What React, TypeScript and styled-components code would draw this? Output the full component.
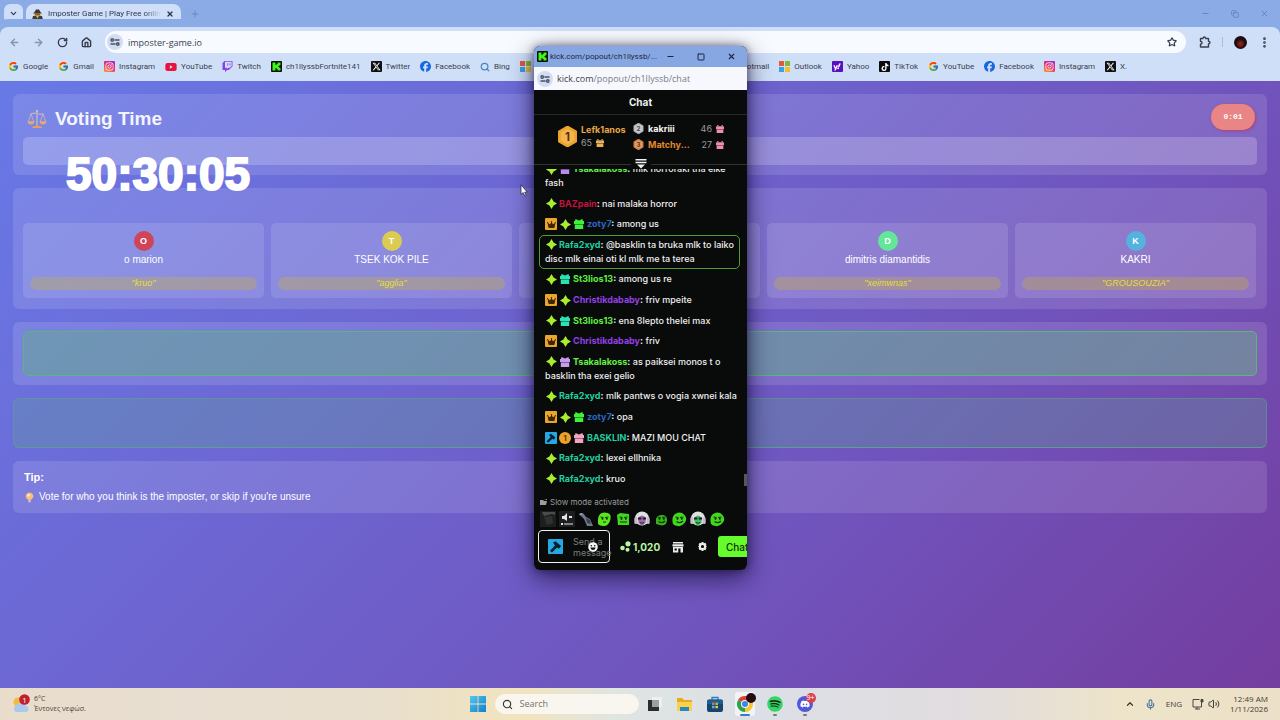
import React from "react";
import styled, { createGlobalStyle, css } from "styled-components";
import {
  ArrowLeft, ArrowRight, ChevronDown, ChevronUp, EllipsisVertical, House, Mic, Minus,
  Plus, RotateCw, Search, Square, Star, Volume2, X, Copy,
} from "lucide-react";
import {
  FaCrown, FaDiscord, FaFacebook, FaInstagram, FaSpotify, FaTiktok,
  FaTwitch, FaXTwitter, FaYahoo, FaYoutube,
} from "react-icons/fa6";
import { FcGoogle } from "react-icons/fc";

const GlobalStyle = createGlobalStyle`
  * { box-sizing: border-box; }
  body { margin: 0; font-family: "Liberation Sans", Arial, sans-serif; }
  button, input, textarea { font: inherit; color: inherit; }
  button { border: 0; padding: 0; background: none; display: flex; align-items: center; justify-content: center; }
  a { color: inherit; text-decoration: none; }
  h1, h2, p, ul, ol { margin: 0; padding: 0; }
  ul, ol { list-style: none; }
  svg { flex: none; display: block; }
`;

const uiFont = css`font-family: "Open Sans", "Noto Sans", sans-serif;`;
const labelFont = css`font-family: Roboto, "Noto Sans", sans-serif;`;

const Desktop = styled.div`
  position: relative;
  min-height: 100vh;
  display: flex;
  flex-direction: column;
  overflow: hidden;
`;

/* ---------- Browser chrome ---------- */

const TabStrip = styled.div`
  ${labelFont}
  display: flex;
  align-items: center;
  height: 27px;
  padding: 0 8px 0 4px;
  background: #8aabe6;
  color: #2b3550;
`;
const TabSearch = styled.button`
  width: 19px;
  height: 19px;
  border-radius: 6px;
  background: #cfdef8;
`;
const Tab = styled.div`
  display: flex;
  align-items: center;
  align-self: flex-end;
  gap: 5px;
  width: 155px;
  height: 23px;
  margin-left: 3px;
  padding: 0 7px 3px 6px;
  border-radius: 8px 8px 0 0;
  background: #d0dff8;
  font-size: 8px;
  line-height: 12px;
`;
const TabTitle = styled.span`
  flex: 1;
  overflow: hidden;
  white-space: nowrap;
  mask-image: linear-gradient(90deg, #000 85%, transparent);
`;
const NewTab = styled.button`
  margin-left: 9px;
  color: #6382bd;
`;
const WindowButtons = styled.div`
  display: flex;
  gap: 21px;
  margin-left: auto;
  padding-right: 3px;
  color: #5a77b0;
`;

const Toolbar = styled.div`
  ${uiFont}
  display: flex;
  align-items: center;
  gap: 13px;
  height: 30px;
  padding: 0 9px;
  border-radius: 8px 8px 0 0;
  background: #d0dff8;
  box-shadow: 0 -8px 0 #8aabe6;
  color: #39404f;
`;
const ToolbarEnd = styled.div`
  display: flex;
  align-items: center;
  gap: 11px;
`;
const NavButton = styled.button<{ $dim?: boolean }>`
  width: 11px;
  height: 16px;
  color: ${(p) => (p.$dim ? "#8794ae" : "#363c4b")};
`;
const AddressBar = styled.div`
  display: flex;
  flex: 1;
  align-items: center;
  gap: 5px;
  height: 22px;
  padding: 0 9px 0 2px;
  border-radius: 11px;
  background: #f7faff;
`;
const TuneBadge = styled.span`
  display: flex;
  flex: none;
  align-items: center;
  justify-content: center;
  width: 16px;
  height: 16px;
  border-radius: 50%;
  background: #d2dcf3;
`;
const AddressInput = styled.input`
  flex: 1;
  min-width: 0;
  padding: 0;
  border: 0;
  background: none;
  font-size: 9px;
  color: #3c4250;
`;
const Divider = styled.span`
  width: 1px;
  height: 10px;
  background: #a5bbe4;
`;
const ProfileButton = styled.button`
  width: 13px;
  height: 13px;
  border-radius: 50%;
  background: radial-gradient(circle at 50% 60%, #8a1c1c 0 15%, #1a0d10 45%);
`;

const Bookmarks = styled.nav`
  ${labelFont}
  display: flex;
  height: 24px;
  padding: 0 8px 5px;
  background: #d0dff8;
  font-size: 8px;
  color: #39404f;
`;
const BookmarkGroup = styled.div<{ $grow: string }>`
  display: flex;
  flex: ${(p) => p.$grow};
  min-width: 0;
  align-items: center;
  gap: 10px;
  overflow: hidden;
`;
const Bookmark = styled.a`
  display: flex;
  align-items: center;
  gap: 4px;
  white-space: nowrap;
`;
const SquareIcon = styled.span<{ $bg: string; $fg?: string; $size?: number; $round?: boolean }>`
  display: flex;
  flex: none;
  align-items: center;
  justify-content: center;
  width: ${(p) => p.$size || 11}px;
  height: ${(p) => p.$size || 11}px;
  border-radius: ${(p) => (p.$round ? "50%" : "1px")};
  background: ${(p) => p.$bg};
  color: ${(p) => p.$fg || "#fff"};
`;

/* ---------- Voting page ---------- */

const Site = styled.main`
  flex: 1;
  display: flex;
  flex-direction: column;
  gap: 13px;
  padding: 13px;
  background: linear-gradient(135deg, #6879e6 0%, #6d66d2 35%, #7055be 65%, #743d9f 100%);
  color: #fff;
`;
const Panel = styled.section<{ $pad: string }>`
  padding: ${(p) => p.$pad};
  border-radius: 6px;
  background: rgba(255, 255, 255, 0.12);
`;
const VotingHead = styled.div`
  display: flex;
  align-items: center;
  justify-content: space-between;
  height: 26px;
`;
const VotingTitle = styled.h1`
  display: flex;
  align-items: center;
  gap: 8px;
  padding: 3px 0 0 4px;
  font-size: 19px;
  line-height: 24px;
  color: #f3f4ff;
`;
const Countdown = styled.div`
  width: 44px;
  height: 26px;
  margin-right: 2px;
  border-radius: 13px;
  background: #ea8585;
  box-shadow: 1px 1px 3px rgba(200, 40, 70, 0.6);
  font: bold 8px/26px "Liberation Mono", monospace;
  text-align: center;
`;
const HintBar = styled.div`
  height: 28px;
  margin-top: 7px;
  border-radius: 5px;
  background: rgba(255, 255, 255, 0.2);
`;
const PlayerGrid = styled.ul`
  display: grid;
  grid-template-columns: repeat(5, 1fr);
  gap: 7px;
`;
const PlayerCard = styled.li`
  display: flex;
  flex-direction: column;
  align-items: center;
  min-height: 75px;
  padding: 8px 7px;
  border-radius: 5px;
  background: rgba(255, 255, 255, 0.12);
`;
const Avatar = styled.span<{ $color: string }>`
  width: 20px;
  height: 20px;
  border-radius: 50%;
  background: ${(p) => p.$color};
  font-size: 9px;
  font-weight: bold;
  line-height: 20px;
  text-align: center;
`;
const PlayerName = styled.span`
  margin: 3px 0 11px;
  font-size: 10px;
  line-height: 12px;
`;
const WordPill = styled.span`
  align-self: stretch;
  height: 13px;
  border-radius: 7px;
  background: rgba(205, 180, 50, 0.32);
  color: #e4de3c;
  font-size: 9px;
  font-style: italic;
  line-height: 12px;
  text-align: center;
`;
const ResultBox = styled.div`
  height: 45px;
  border: 1px solid #58b878;
  border-radius: 5px;
  background: rgba(96, 175, 130, 0.45);
`;
const StatusBox = styled.section`
  height: 50px;
  border: 1px solid rgba(90, 165, 130, 0.5);
  border-bottom-color: #5a9f93;
  border-radius: 6px;
  background: rgba(96, 165, 150, 0.3);
`;
const TipTitle = styled.h2`
  font-size: 11px;
  line-height: 12px;
`;
const TipText = styled.p`
  display: flex;
  align-items: center;
  gap: 4px;
  margin-top: 8px;
  font-size: 10px;
  line-height: 12px;
`;

/* ---------- Overlays ---------- */

const StreamTimer = styled.div`
  position: absolute;
  left: 66px;
  top: 148px;
  font-size: 46px;
  font-weight: bold;
  line-height: 52px;
  color: #fff;
  -webkit-text-stroke: 2px #fff;
  stroke-linejoin: round;
`;
const Cursor = styled.svg`
  position: absolute;
  left: 520px;
  top: 184px;
`;

/* ---------- Chat pop-out ---------- */

const Popup = styled.section`
  position: absolute;
  left: calc(50% - 106px);
  top: 46px;
  display: flex;
  flex-direction: column;
  width: 213px;
  overflow: hidden;
  border-radius: 6px;
  background: #090a0a;
  color: #f0f0f0;
  font-family: Inter, sans-serif;
  font-size: 9px;
`;
const PopupShadow = styled.div`
  position: absolute;
  left: calc(50% - 106px);
  top: 46px;
  width: 213px;
  height: 524px;
  border-radius: 6px;
  box-shadow: 0 8px 26px rgba(10, 5, 40, 0.65), 0 0 8px rgba(10, 5, 40, 0.5);
`;
const PopupTitle = styled.div`
  ${labelFont}
  display: flex;
  align-items: center;
  gap: 2px;
  height: 21px;
  padding: 0 11px 0 3px;
  background: #87a7e3;
  font-size: 8px;
  color: #1d2740;
`;
const PopupButtons = styled.div`
  display: flex;
  gap: 22px;
  margin-left: auto;
`;
const PopupAddress = styled.div`
  ${uiFont}
  display: flex;
  align-items: center;
  gap: 4px;
  height: 23px;
  padding: 0 3px;
  background: #f6f8fd;
  font-size: 9px;
  color: #777d88;
  b { color: #3f4450; font-weight: 400; }
`;
const ChatHeading = styled.h2`
  height: 25px;
  border-bottom: 1px solid #26282a;
  font-size: 10px;
  line-height: 24px;
  text-align: center;
`;
const Leaderboard = styled.div`
  position: relative;
  display: flex;
  align-items: center;
  height: 50px;
  padding: 0 23px 6px;
  border-bottom: 1px solid #303234;
`;
const Leader = styled.div`
  display: flex;
  align-items: center;
  gap: 3px;
  width: 76px;
`;
const LeaderText = styled.div`
  display: flex;
  flex-direction: column;
  gap: 1px;
  line-height: 12px;
`;
const RunnersUp = styled.ol`
  display: flex;
  flex: 1;
  flex-direction: column;
  gap: 4px;
  line-height: 12px;
`;
const Runner = styled.li`
  display: flex;
  align-items: center;
  gap: 4px;
`;
const RankName = styled.strong<{ $color: string }>`
  flex: 1;
  color: ${(p) => p.$color};
  font-weight: 700;
`;
const Count = styled.span`
  display: flex;
  align-items: center;
  gap: 4px;
  font-size: 9px;
  color: #9a9c9e;
`;
const Collapse = styled.button`
  position: absolute;
  left: calc(50% - 10px);
  bottom: -6px;
  width: 20px;
  height: 12px;
  background: #090a0a;
`;
const ChatLog = styled.div`
  position: relative;
  height: 317px;
  margin-top: 4px;
  overflow: hidden;
`;
const Messages = styled.ul`
  display: flex;
  flex-direction: column;
  justify-content: space-between;
  height: 324px;
  margin-top: -7px;
  padding: 0 10px 0 11px;
`;
const Message = styled.li<{ $marked?: boolean }>`
  font-weight: 500;
  line-height: 14px;
  ${(p) => p.$marked && css`
    margin: -3px -3px -3px -6px;
    padding: 2px 5px;
    border: 1px solid #4f9e32;
    border-radius: 5px;
  `}
`;
const BadgeSlot = styled.span`
  display: inline-flex;
  align-items: center;
  justify-content: center;
  width: 12px;
  height: 12px;
  margin-right: 2px;
  vertical-align: top;
  margin-top: 1px;
`;
const UserName = styled.span<{ $color: string }>`
  color: ${(p) => p.$color};
  font-weight: 700;
`;
const ScrollThumb = styled.span`
  position: absolute;
  right: 0;
  bottom: -3px;
  width: 3px;
  height: 15px;
  background: #55585a;
`;
const SlowMode = styled.p`
  display: flex;
  align-items: center;
  gap: 3px;
  margin-top: 9px;
  padding-left: 6px;
  font-size: 8px;
  line-height: 14px;
  color: #9a9c9f;
`;
const Emotes = styled.div`
  display: flex;
  justify-content: space-between;
  height: 16px;
  margin-top: 2px;
  padding: 0 22px 0 6px;
`;
const Composer = styled.div`
  display: flex;
  align-items: center;
  height: 33px;
  margin: 3px 0 7px 4px;
`;
const InputBox = styled.label`
  position: relative;
  display: flex;
  flex: none;
  align-items: center;
  gap: 10px;
  width: 72px;
  height: 33px;
  padding-left: 9px;
  border: 1px solid #f2f2f2;
  border-radius: 4px;
`;
const MessageInput = styled.textarea`
  flex: none;
  width: 44px;
  height: 22px;
  padding: 0;
  border: 0;
  background: none;
  resize: none;
  overflow: hidden;
  font-size: 9px;
  line-height: 11px;
  &::placeholder { color: #7b7e80; opacity: 1; }
`;
const EmojiButton = styled.button`
  position: absolute;
  right: 11px;
  top: 11px;
`;
const Points = styled.button`
  flex: none;
  gap: 2px;
  margin-left: 10px;
  color: #b9f5a4;
  font-size: 10px;
  font-weight: 700;
`;
const ToolButton = styled.button`
  flex: none;
  width: 12px;
  height: 12px;
  margin-left: 12px;
`;
const ChatButton = styled.button`
  flex: none;
  width: 38px;
  height: 21px;
  margin-left: 10px;
  border-radius: 3px;
  background: #66fb2b;
  color: #123006;
  font-size: 10px;
  font-weight: 500;
`;

/* ---------- Taskbar ---------- */

const Taskbar = styled.footer`
  ${uiFont}
  display: grid;
  grid-template-columns: 1fr auto 1fr;
  align-items: center;
  height: 32px;
  padding: 0 12px;
  background: linear-gradient(90deg, #e9dccb 0%, #e8dfd2 15%, #e9dfcd 30%, #f2e4bd 41%, #dfe5e2 48%, #dcdfe6 60%, #e1dcdf 75%, #eee4c9 88%, #ece1c8 100%);
  color: #3d3a38;
  font-size: 8px;
  line-height: 10px;
`;
const Weather = styled.div`
  display: flex;
  align-items: center;
  gap: 4px;
`;
const WeatherText = styled.div`
  color: #4b453f;
  font-size: 7px;
`;
const Apps = styled.div`
  display: flex;
  align-items: center;
  gap: 10px;
  margin-left: 4px;
`;
const SearchBox = styled.label`
  display: flex;
  align-items: center;
  gap: 7px;
  width: 144px;
  height: 20px;
  margin: 0 -4px 0 -1px;
  padding: 0 7px;
  border-radius: 10px;
  background: #f8f6ee;
`;
const SearchInput = styled.input`
  width: 100px;
  padding: 0;
  border: 0;
  background: none;
  font-size: 9px;
  &::placeholder { color: #77746f; opacity: 1; }
`;
const AppButton = styled.button<{ $active?: boolean }>`
  position: relative;
  width: 20px;
  height: 24px;
  border-radius: 3px;
  background: ${(p) => (p.$active ? "rgba(255,255,255,.6)" : "none")};
`;
const Running = styled.span<{ $wide?: boolean }>`
  position: absolute;
  bottom: 0;
  width: ${(p) => (p.$wide ? "10px" : "4px")};
  height: 2px;
  border-radius: 1px;
  background: ${(p) => (p.$wide ? "#2f7fc4" : "#7a7a7a")};
`;
const AppBadge = styled.span<{ $bg: string }>`
  position: absolute;
  right: -1px;
  top: 1px;
  width: 10px;
  height: 10px;
  border-radius: 50%;
  background: ${(p) => p.$bg};
  color: #fff;
  font-size: 7px;
  line-height: 10px;
  text-align: center;
`;
const Tray = styled.div`
  display: flex;
  align-items: center;
  justify-content: flex-end;
  gap: 10px;
`;
const TrayPair = styled.span`
  display: flex;
  align-items: center;
  gap: 4px;
`;
const Clock = styled.div`
  text-align: right;
`;

/* ---------- Drawings ---------- */

const TuneIcon = () => (
  <svg width="10" height="10" viewBox="0 0 10 10" fill="none" stroke="#4a5264" strokeWidth="1.4">
    <circle cx="2.2" cy="3" r="1.2" /><path d="M4.4 3H9.5M.5 7H5.6" /><circle cx="7.8" cy="7" r="1.2" />
  </svg>
);
const KickLogo = ({ size = 11 }: { size?: number }) => (
  <svg width={size} height={size} viewBox="0 0 11 11">
    <rect width="11" height="11" rx="1" fill="#061006" />
    <path d="M1.5 1.5H4.5V4H5.5V3H6.5V1.5H9.5V4H8.5V5H7.5V6H8.5V7H9.5V9.5H6.5V8H5.5V7H4.5V9.5H1.5Z" fill="#3ff51d" />
  </svg>
);
const MicrosoftLogo = () => (
  <svg width="11" height="11" viewBox="0 0 11 11">
    <path d="M0 0H5V5H0Z" fill="#e25a3c" /><path d="M6 0H11V5H6Z" fill="#7fb83a" />
    <path d="M0 6H5V11H0Z" fill="#3aa0e4" /><path d="M6 6H11V11H6Z" fill="#f4bd2c" />
  </svg>
);
const ImposterIcon = () => (
  <svg width="11" height="11" viewBox="0 0 11 11">
    <path d="M2.5 3L4 .5H7L8.5 3L10 4.500H1Z" fill="#35373a" /><path d="M2.500 4H8.500V7H2.500Z" fill="#c48e35" />
    <path d="M3 4.500H8V5.500H3Z" fill="#4a3a20" />
    <path d="M0 11L1 7H10L11 11Z" fill="#3b3e3d" /><path d="M4 7L5.500 9.500L7 7Z" fill="#d8b842" />
  </svg>
);
const ScalesIcon = () => (
  <svg width="20" height="20" viewBox="0 0 20 20" fill="none">
    <path d="M10 1.500V17" stroke="#c6b3bd" strokeWidth="1.400" />
    <path d="M3.500 5Q7 3.500 10 4.500T16.500 5" stroke="#c6b3bd" strokeWidth="1.100" />
    <path d="M4 5L1.300 12.500M4 5L6.800 12.500M16 5L13.200 12.500M16 5L18.700 12.500" stroke="#cfb9b5" strokeWidth=".8" />
    <path d="M.5 12.300H7.500Q7 15.500 4 15.500T.5 12.300ZM12.500 12.300H19.500Q19 15.500 16 15.500T12.500 12.300Z" fill="#eaa969" />
    <path d="M5 19Q5.500 16.800 10 16.800T15 19Z" fill="#eaa04f" />
    <circle cx="10" cy="2" r="1.200" fill="#d5bdb5" />
  </svg>
);
const BulbIcon = () => (
  <svg width="11" height="11" viewBox="0 0 11 11">
    <path d="M5.500 .5A3.600 3.600 0 0 0 3.500 7.200L4 8.300H7L7.500 7.200A3.600 3.600 0 0 0 5.500 .5Z" fill="#f6bd7c" />
    <circle cx="4.800" cy="3.300" r="1.200" fill="#ffeccb" /><path d="M4.300 8.300H6.700V10.300H4.300Z" fill="#d7c3d0" />
  </svg>
);
const StarBadge = () => (
  <svg width="11" height="11" viewBox="0 0 11 11">
    <path d="M5.500 0L7.600 3.400L11 5.500L7.600 7.600L5.500 11L3.400 7.600L0 5.500L3.400 3.400Z" fill="#a8ee2c" />
  </svg>
);
const Gift = ({ color, size = 10 }: { color: string; size?: number }) => (
  <svg width={size} height={size} viewBox="0 0 10 10">
    <path d="M1.500 0L5 1.500L8.500 0L9 2H1Z" fill={color} />
    <path d="M0 2H10V5H0ZM.8 5H9.200V10H.8Z" fill={color} />
    <path d="M1 5H9V5.800H1Z" fill="#00000077" />
  </svg>
);
const Hexagon = ({ n, color, size, ink = "#5c3000" }: { n: number; color: string; size: number; ink?: string }) => (
  <svg width={size} height={size} viewBox="0 0 20 20">
    <path d="M10 0L18.500 5V15L10 20L1.500 15V5Z" fill={color} stroke={color} strokeLinejoin="round" />
    <path d="M10 2.500L16.300 6.200V13.800L10 17.500L3.700 13.800V6.200Z" fill="#ffffff30" />
    <text x="10" y="14" fontSize="11" fontWeight="700" textAnchor="middle" fill={ink}>{n}</text>
  </svg>
);
const Hammer = ({ size = 12 }: { size?: number }) => (
  <SquareIcon $bg="#25a9e5" $size={size}>
    <svg width={size} height={size} viewBox="0 0 12 12">
      <path d="M4 2.800L6 1.800L10.500 5.500L8.800 7.800L7.300 6.800L3.200 10.800L1.600 9.300L5.600 5.200Z" fill="#06202e" />
    </svg>
  </SquareIcon>
);
const Blob = ({ face, color = "#43d51f" }: { face: number; color?: string }) => (
  <svg width="16" height="16" viewBox="0 0 16 16">
    <path
      d={face === 1 ? "M2 13Q1 1.500 8.500 1.500T14.500 8T8.500 15Q4 15.500 2 13Z"
        : face === 2 ? "M2 4L5 2L14 3V14H3Z"
        : face === 3 ? "M3 13V8Q4 4 9 4T14 9T9 14.500Z"
        : "M2 13Q0 5 5 2.500T13.500 4T13.500 12T7 15Q3.500 15 2 13Z"}
      fill={color}
    />
    <path d="M4.500 6L7.500 6.500M9 6.500L12.500 6" stroke="#0c3a08" strokeWidth="1" />
    <circle cx="6.500" cy="7.700" r="1" fill="#0b2408" /><circle cx="10.800" cy="7.700" r="1" fill="#0b2408" />
    <path d={face === 2 ? "M5 11H12" : face === 1 ? "M7 11H10" : "M5.500 10.500Q9 13 12 10"} stroke="#0c3a08" strokeWidth="1.200" fill="none" />
  </svg>
);
const HeadsetFace = ({ inner }: { inner: string }) => (
  <svg width="16" height="16" viewBox="0 0 16 16">
    <circle cx="8" cy="7.500" r="7" fill="#dfe3df" />
    <rect x=".3" y="6" width="3" height="7" rx="1.500" fill="#c9b8d0" />
    <rect x="12.700" y="6" width="3" height="7" rx="1.500" fill="#c9b8d0" />
    <path d="M4 7Q8 2 12 7L11.500 12L8 15L4.500 12Z" fill={inner} />
    <path d="M4 7.500H7.300M8.700 7.500H12" stroke="#2a1430" strokeWidth="2" />
    <path d="M6 11.500Q8 13 10 11.500" stroke="#18330f" fill="none" />
  </svg>
);
const WindowsLogo = () => (
  <svg width="16" height="16" viewBox="0 0 16 16">
    <defs><linearGradient id="win" x2="1" y2="1"><stop stopColor="#52c6ee" /><stop offset="1" stopColor="#1380c9" /></linearGradient></defs>
    <path d="M0 0H7.600V7.600H0ZM8.400 0H16V7.600H8.400ZM0 8.400H7.600V16H0ZM8.400 8.400H16V16H8.400Z" fill="url(#win)" />
  </svg>
);
const ChromeLogo = () => (
  <svg width="16" height="16" viewBox="0 0 16 16">
    <path d="M8 8L1.070 4A8 8 0 0 1 14.930 4Z" fill="#dd4437" />
    <path d="M8 8L14.930 4A8 8 0 0 1 8 16Z" fill="#f6c52c" />
    <path d="M8 8L8 16A8 8 0 0 1 1.070 4Z" fill="#2ba24c" />
    <circle cx="8" cy="8" r="4" fill="#f4f7fb" /><circle cx="8" cy="8" r="3" fill="#3f83ee" />
  </svg>
);

/* ---------- Data ---------- */

const google = <FcGoogle size={11} />;
const insta = <SquareIcon $bg="linear-gradient(210deg,#8a35d6,#e62a7a 45%,#fba02e)"><FaInstagram size={9} /></SquareIcon>;
const xLogo = <SquareIcon $bg="#0d0f12"><FaXTwitter size={9} /></SquareIcon>;
const facebook = <FaFacebook size={11} color="#1769e0" />;

const leftBookmarks: [string, React.ReactNode][] = [
  ["Google", google],
  ["Gmail", google],
  ["Instagram", insta],
  ["YouTube", <FaYoutube size={12} color="#e5133d" />],
  ["Twitch", <FaTwitch size={11} color="#8a3fe8" />],
  ["ch1llyssbFortnite141", <KickLogo />],
  ["Twitter", xLogo],
  ["Facebook", facebook],
  ["Bing", <Search size={10} strokeWidth={3} color="#4a86c8" />],
  ["MSN", <MicrosoftLogo />],
];
const rightBookmarks: [string, React.ReactNode][] = [
  ["Hotmail", null],
  ["Outlook", <MicrosoftLogo />],
  ["Yahoo", <SquareIcon $bg="#5a10c0"><FaYahoo size={8} /></SquareIcon>],
  ["TikTok", <SquareIcon $bg="#0b0b0e"><FaTiktok size={8} /></SquareIcon>],
  ["YouTube", google],
  ["Facebook", facebook],
  ["Instagram", insta],
  ["X.", xLogo],
];

const players = [
  { letter: "O", name: "o marion", word: '"kruo"', color: "#cf4558" },
  { letter: "T", name: "TSEK KOK PILE", word: '"agglia"', color: "#dccb51" },
  null,
  { letter: "D", name: "dimitris diamantidis", word: '"xeimwnas"', color: "#63e697" },
  { letter: "K", name: "KAKRI", word: '"GROUSOUZIA"', color: "#55b2de" },
];

const crown = <SquareIcon $bg="#eba52d" $fg="#3d2600" $size={12}><FaCrown size={9} /></SquareIcon>;
const star = <StarBadge />;
const coin = (
  <svg width="12" height="12" viewBox="0 0 12 12">
    <circle cx="6" cy="6" r="6" fill="#eda22b" />
    <text x="6" y="9" fontSize="8" fontWeight="700" textAnchor="middle" fill="#5f3600">1</text>
  </svg>
);

type Chat = { badges: React.ReactNode[]; user: string; color: string; text: string; marked?: boolean };
const teal = "#20cfa0";
const chat: Chat[] = [
  { badges: [star, <Gift color="#b98bf0" />], user: "Tsakalakoss", color: "#63f045", text: "mlk horroraki tha eike fash" },
  { badges: [star], user: "BAZpain", color: "#c4123f", text: "nai malaka horror" },
  { badges: [crown, star, <Gift color="#3df03a" />], user: "zoty7", color: "#2a68c4", text: "among us" },
  { badges: [star], user: "Rafa2xyd", color: teal, text: "@basklin ta bruka mlk to laiko disc mlk einai oti kl mlk me ta terea", marked: true },
  { badges: [star, <Gift color="#2be3b0" />], user: "St3lios13", color: "#5df03e", text: "among us re" },
  { badges: [crown, star], user: "Christikdababy", color: "#9440e8", text: "friv mpeite" },
  { badges: [star, <Gift color="#2be3b0" />], user: "St3lios13", color: "#5df03e", text: "ena 8lepto thelei max" },
  { badges: [crown, star], user: "Christikdababy", color: "#9440e8", text: "friv" },
  { badges: [star, <Gift color="#c69bf0" />], user: "Tsakalakoss", color: "#63f045", text: "as paiksei monos t o basklin tha exei gelio" },
  { badges: [star], user: "Rafa2xyd", color: teal, text: "mlk pantws o vogia xwnei kala" },
  { badges: [crown, star, <Gift color="#3df03a" />], user: "zoty7", color: "#2a68c4", text: "opa" },
  { badges: [<Hammer />, coin, <Gift color="#f0a5c0" />], user: "BASKLIN", color: teal, text: "MAZI MOU CHAT" },
  { badges: [star], user: "Rafa2xyd", color: teal, text: "lexei ellhnika" },
  { badges: [star], user: "Rafa2xyd", color: teal, text: "kruo" },
];

const BookmarkList = ({ items }: { items: [string, React.ReactNode][] }) => (
  <>
    {items.map(([label, icon], i) => (
      <Bookmark href="#" key={i}>{icon}{label}</Bookmark>
    ))}
  </>
);

function ChatPopup() {
  return (
    <Popup aria-label="Chat window">
      <PopupTitle>
        <KickLogo />
        <span>kick.com/popout/ch1llyssb/...</span>
        <PopupButtons>
          <button aria-label="Minimize"><Minus size={9} strokeWidth={3} /></button>
          <button aria-label="Maximize"><Square size={8} strokeWidth={3} /></button>
          <button aria-label="Close"><X size={9} strokeWidth={3} /></button>
        </PopupButtons>
      </PopupTitle>
      <PopupAddress>
        <TuneBadge><TuneIcon /></TuneBadge>
        <span><b>kick.com</b>/popout/ch1llyssb/chat</span>
      </PopupAddress>
      <ChatHeading>Chat</ChatHeading>
      <Leaderboard>
        <Leader>
          <Hexagon n={1} color="#eea52c" size={21} />
          <LeaderText>
            <RankName $color="#e8a646">Lefk1anos</RankName>
            <Count>65 <Gift color="#e8b25a" size={8} /></Count>
          </LeaderText>
        </Leader>
        <RunnersUp>
          <Runner>
            <Hexagon n={2} color="#b9bcc2" size={11} ink="#44474c" />
            <RankName $color="#f4f4f4">kakriii</RankName>
            <Count>46 <Gift color="#ee8fb0" size={8} /></Count>
          </Runner>
          <Runner>
            <Hexagon n={3} color="#d98548" size={11} />
            <RankName $color="#e38a2e">Matchy...</RankName>
            <Count>27 <Gift color="#ee8fb0" size={8} /></Count>
          </Runner>
        </RunnersUp>
        <Collapse aria-label="Collapse leaderboard">
          <svg width="12" height="10" viewBox="0 0 12 10">
            <path d="M.5 0H11.500V1.500H.5ZM.5 2.800H11.500V4.300H.5ZM2 5.500H10L6 9.500Z" fill="#f2f2f2" />
          </svg>
        </Collapse>
      </Leaderboard>
      <ChatLog>
        <Messages>
          {chat.map((m, i) => (
            <Message key={i} $marked={m.marked}>
              {m.badges.map((b, j) => <BadgeSlot key={j}>{b}</BadgeSlot>)}
              <UserName $color={m.color}>{m.user}</UserName><b>:</b> {m.text}
            </Message>
          ))}
        </Messages>
        <ScrollThumb />
      </ChatLog>
      <SlowMode>
        <svg width="7" height="7" viewBox="0 0 7 7"><path d="M0 1H3L4 2H7L6 6H0Z" fill="#9a9c9f" /><path d="M4 1L7 0V1Z" fill="#9a9c9f" /></svg>
        Slow mode activated
      </SlowMode>
      <Emotes>
        <svg width="16" height="16" viewBox="0 0 16 16">
          <rect width="16" height="16" fill="#1d1e1e" /><path d="M2 1H15V4L12 3L4 5Z" fill="#4a4c4c" /><path d="M4 6L12 5L13 12L7 14Z" fill="#303232" />
        </svg>
        <svg width="16" height="16" viewBox="0 0 16 16">
          <rect width="16" height="16" fill="#1c1e1f" /><path d="M3 5H5L8 2V10L5 8H3ZM10 5H13V7H10ZM2 12H4V14H2ZM5 12.500H14V13.500H5Z" fill="#e4e6e6" />
        </svg>
        <svg width="16" height="16" viewBox="0 0 16 16">
          <path d="M1 3L5 2L8 6L12 8L15 15H9L6 8Z" fill="#6f7a8c" /><path d="M8 7L12 9L13 13L9 12Z" fill="#39424f" /><path d="M1 3L3 4L4 2Z" fill="#c7ced8" />
        </svg>
        <Blob face={1} color="#5be61f" />
        <Blob face={2} />
        <HeadsetFace inner="#9a6aa6" />
        <Blob face={3} color="#38b31c" />
        <Blob face={4} />
        <HeadsetFace inner="#3fbf62" />
        <Blob face={5} />
      </Emotes>
      <Composer>
        <InputBox>
          <Hammer size={15} />
          <MessageInput placeholder="Send a message" aria-label="Send a message" />
          <EmojiButton aria-label="Emotes">
            <svg width="10" height="10" viewBox="0 0 10 10">
              <circle cx="5" cy="5" r="4.800" fill="#f4f4f4" /><circle cx="3.300" cy="3.700" r=".8" fill="#111" /><circle cx="6.700" cy="3.700" r=".8" fill="#111" />
              <path d="M2.300 5.500H7.700Q7 8 5 8T2.300 5.500Z" fill="#111" />
            </svg>
          </EmojiButton>
        </InputBox>
        <Points>
          <svg width="11" height="11" viewBox="0 0 11 11" fill="#b9f5a4"><circle cx="8" cy="2.800" r="2.600" /><circle cx="2.500" cy="7" r="2.300" /><circle cx="7.500" cy="8.800" r="2" /></svg>
          1,020
        </Points>
        <ToolButton aria-label="Store">
          <svg width="12" height="12" viewBox="0 0 12 12" fill="#ececec"><path d="M1 1H11V2.500H1ZM.5 3.200H11.500V5.500H.5Z" /><path fillRule="evenodd" d="M1 6H11V11.500H8.500V7.500H6.300V11.500H1ZM2.500 7.500V9.500H4.800V7.500Z" /></svg>
        </ToolButton>
        <ToolButton aria-label="Settings">
          <svg width="9" height="9" viewBox="0 0 10 10"><path fillRule="evenodd" d="M4 0H6L6.400 1.300L8 .9L9.300 2.500L8.700 3.800L10 5L8.700 6.200L9.300 7.500L8 9.100L6.400 8.700L6 10H4L3.600 8.700L2 9.100L.7 7.500L1.300 6.200L0 5L1.300 3.800L.7 2.500L2 .9L3.600 1.300ZM5 3.200A1.800 1.800 0 1 0 5 6.800A1.800 1.800 0 1 0 5 3.200Z" fill="#ececec" /></svg>
        </ToolButton>
        <ChatButton>Chat</ChatButton>
      </Composer>
    </Popup>
  );
}

export default function App() {
  return (
    <Desktop>
      <GlobalStyle />
      <TabStrip>
        <TabSearch aria-label="Search tabs"><ChevronDown size={9} strokeWidth={3} /></TabSearch>
        <Tab>
          <ImposterIcon />
          <TabTitle>Imposter Game | Play Free online</TabTitle>
          <button aria-label="Close tab"><X size={8} strokeWidth={4} /></button>
        </Tab>
        <NewTab aria-label="New tab"><Plus size={10} /></NewTab>
        <WindowButtons>
          <button aria-label="Minimize"><Minus size={9} /></button>
          <button aria-label="Restore"><Copy size={8} /></button>
          <button aria-label="Close"><X size={9} /></button>
        </WindowButtons>
      </TabStrip>
      <Toolbar>
        <NavButton $dim aria-label="Back"><ArrowLeft size={11} strokeWidth={3} /></NavButton>
        <NavButton $dim aria-label="Forward"><ArrowRight size={11} strokeWidth={3} /></NavButton>
        <NavButton aria-label="Reload"><RotateCw size={11} strokeWidth={3} /></NavButton>
        <NavButton aria-label="Home"><House size={11} strokeWidth={3} /></NavButton>
        <AddressBar>
          <TuneBadge><TuneIcon /></TuneBadge>
          <AddressInput aria-label="Address" defaultValue="imposter-game.io" />
          <button aria-label="Bookmark"><Star size={10} strokeWidth={3} /></button>
        </AddressBar>
        <ToolbarEnd>
          <button aria-label="Extensions">
            <svg width="12" height="12" viewBox="0 0 12 12" fill="none" stroke="#39404f" strokeWidth="1.400" strokeLinejoin="round">
              <path d="M1.500 2.500H4Q4.200 1 5.300 1T6.600 2.500H9.500V5.300Q11 5.500 11 6.600T9.500 8V11H1.500V8.300Q3 8 3 6.800T1.500 5.300Z" />
            </svg>
          </button>
          <Divider />
          <ProfileButton aria-label="Profile" />
          <button aria-label="Menu"><EllipsisVertical size={13} strokeWidth={3} /></button>
        </ToolbarEnd>
      </Toolbar>
      <Bookmarks aria-label="Bookmarks">
        <BookmarkGroup $grow="0 0 58%"><BookmarkList items={leftBookmarks} /></BookmarkGroup>
        <BookmarkGroup $grow="1"><BookmarkList items={rightBookmarks} /></BookmarkGroup>
      </Bookmarks>

      <Site>
        <Panel $pad="10px">
          <VotingHead>
            <VotingTitle><ScalesIcon />Voting Time</VotingTitle>
            <Countdown>0:01</Countdown>
          </VotingHead>
          <HintBar />
        </Panel>
        <Panel $pad="35px 11px 11px 10px">
          <PlayerGrid>
            {players.map((p, i) => (
              <PlayerCard key={i}>
                {p && (
                  <>
                    <Avatar $color={p.color}>{p.letter}</Avatar>
                    <PlayerName>{p.name}</PlayerName>
                    <WordPill>{p.word}</WordPill>
                  </>
                )}
              </PlayerCard>
            ))}
          </PlayerGrid>
        </Panel>
        <Panel $pad="9px 10px"><ResultBox /></Panel>
        <StatusBox />
        <Panel $pad="10px 11px">
          <TipTitle>Tip:</TipTitle>
          <TipText><BulbIcon />Vote for who you think is the imposter, or skip if you're unsure</TipText>
        </Panel>
      </Site>

      <Taskbar>
        <Weather>
          <svg width="18" height="20" viewBox="0 0 18 20">
            <circle cx="6" cy="8" r="4.500" fill="#f2bd3e" />
            <path d="M4 18A3.500 3.500 0 0 1 4 11.500Q6 8 10 9.500Q13 9.500 13.500 12A3 3 0 0 1 13.500 18Z" fill="#a9c9ee" />
            <circle cx="12.500" cy="5.500" r="5.300" fill="#c0202b" />
            <text x="12.500" y="8.500" fontSize="8" textAnchor="middle" fill="#fff">1</text>
          </svg>
          <WeatherText>6°C<br />Έντονες νεφώσ.</WeatherText>
        </Weather>
        <Apps>
          <button aria-label="Start"><WindowsLogo /></button>
          <SearchBox>
            <Search size={11} strokeWidth={2.500} />
            <SearchInput placeholder="Search" aria-label="Search" />
          </SearchBox>
          <AppButton aria-label="Task view">
            <svg width="16" height="16" viewBox="0 0 16 16"><path d="M5 1H15V11H5Z" fill="#f0f0f0" /><path d="M1 4H5V11H12V15H1Z" fill="#2c2d2e" /><path d="M5 4H12V11H5Z" fill="#9d9fa0" /></svg>
          </AppButton>
          <AppButton aria-label="File explorer">
            <svg width="17" height="15" viewBox="0 0 17 15"><path d="M1 1H6L8 3H16V14H1Z" fill="#e7aa25" /><path d="M1 5H16V14H1Z" fill="#f9d14b" /><path d="M4 10H13V14H4Z" fill="#2c87c0" /></svg>
          </AppButton>
          <AppButton aria-label="Store">
            <svg width="16" height="16" viewBox="0 0 16 16"><path d="M5 4V1.500H11V4" stroke="#2a82bd" fill="none" strokeWidth="1.300" /><rect y="3.500" width="16" height="12.500" rx="2" fill="#16456f" /><path d="M0 5Q0 3.500 2 3.500H14Q16 3.500 16 5V8H0Z" fill="#1f6aa3" opacity=".7" /><path d="M5 6.500H7.600V9H5Z" fill="#e46a4e" /><path d="M8.400 6.500H11V9H8.400Z" fill="#8fc54b" /><path d="M5 9.800H7.600V12.300H5Z" fill="#47b5ec" /><path d="M8.400 9.800H11V12.300H8.400Z" fill="#f3c63b" /></svg>
          </AppButton>
          <AppButton $active aria-label="Chrome"><ChromeLogo /><AppBadge $bg="#240b0e" /><Running $wide /></AppButton>
          <AppButton aria-label="Spotify"><SquareIcon $bg="#10210f" $fg="#35d467" $size={14} $round><FaSpotify size={16} /></SquareIcon><Running /></AppButton>
          <AppButton aria-label="Discord"><SquareIcon $bg="#5259d8" $size={16} $round><FaDiscord size={10} /></SquareIcon><AppBadge $bg="#d8434f">9+</AppBadge><Running /></AppButton>
        </Apps>
        <Tray>
          <ChevronUp size={10} strokeWidth={3} />
          <Mic size={11} strokeWidth={2.500} color="#4d74a8" />
          <span>ENG</span>
          <TrayPair>
            <svg width="12" height="12" viewBox="0 0 12 12" fill="none" stroke="#4a4743"><path d="M7.500 1.500H1V9H9.500V6M3 11H8M5 9V11M9.500 6V3" /><path d="M9 1.500H11V4H9Z" fill="#4a4743" /></svg>
            <Volume2 size={12} strokeWidth={2} />
          </TrayPair>
          <Clock>12:49 AM<br />1/11/2026</Clock>
        </Tray>
      </Taskbar>

      <StreamTimer>50:30:05</StreamTimer>
      <PopupShadow />
      <ChatPopup />
      <Cursor width="8" height="13" viewBox="0 0 8 13"><path d="M1 .8V10.500L3.200 8.600L4.800 12.200L6.200 11.500L4.700 8.200H7.300Z" fill="#fff" stroke="#2b2c45" strokeWidth=".8" /></Cursor>
    </Desktop>
  );
}
